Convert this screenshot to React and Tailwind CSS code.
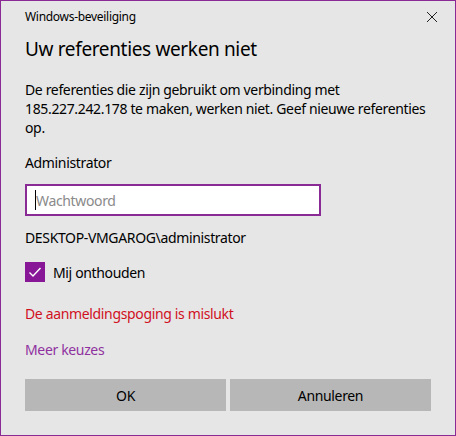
import React from "react";

const App = () => {
  return (
    <div
      className="w-[456px] h-[436px] border border-[#8a2b95] bg-[#e6e6e6] flex flex-col text-black"
      style={{ fontFamily: '"Noto Sans", "Open Sans", sans-serif' }}
    >
      {/* title bar */}
      <div className="h-[32px] flex items-center justify-between pl-[24px] pr-[16px]">
        <span className="text-[12px] tracking-[-0.3px]">Windows-beveiliging</span>
        <svg width="12" height="12" viewBox="0 0 12 12" className="mr-[1px]">
          <path d="M1 1 L11 11 M11 1 L1 11" stroke="#222" strokeWidth="1" />
        </svg>
      </div>

      <div className="flex flex-col px-[24px] tracking-[-0.35px]">
        <div className="text-[19px] leading-[28px] mt-[2px] tracking-[-0.35px]">Uw referenties werken niet</div>

        <p className="text-[14px] leading-[19px] mt-[17px] mr-[-10px]">
          De referenties die zijn gebruikt om verbinding met 185.227.242.178 te maken, werken niet. Geef nieuwe referenties op.
        </p>

        <div className="text-[14px] leading-[20px] mt-[16px]">Administrator</div>

        <div className="mt-[11px] w-[296px] h-[32px] border-2 border-[#8a2b95] bg-white flex items-center pl-[8px]">
          <span className="w-px h-[20px] bg-black"></span>
          <span className="text-[14px] text-[#8a8a8a]">Wachtwoord</span>
        </div>

        <div className="text-[14px] leading-[20px] mt-[12px]">DESKTOP-VMGAROG\administrator</div>

        <div className="flex items-center mt-[12px]">
          <div className="w-[20px] h-[20px] bg-[#881798] flex items-center justify-center">
            <svg width="14" height="14" viewBox="0 0 14 14">
              <path d="M1.5 7.5 L5 11 L12.5 3" stroke="#fff" strokeWidth="1.4" fill="none" />
            </svg>
          </div>
          <span className="text-[14px] ml-[8px] mt-[2px]">Mij onthouden</span>
        </div>

        <div className="text-[14px] leading-[20px] mt-[21px] text-[#d1101f]">De aanmeldingspoging is mislukt</div>

        <div className="text-[14px] leading-[20px] mt-[16px] text-[#8f32a0]">Meer keuzes</div>

        <div className="flex gap-[4px] mt-[19px]">
          <button className="w-[201px] h-[32px] bg-[#b7b7b7] text-[14px]">OK</button>
          <button className="w-[201px] h-[32px] bg-[#b7b7b7] text-[14px]">Annuleren</button>
        </div>
      </div>
    </div>
  );
};

export default App;
